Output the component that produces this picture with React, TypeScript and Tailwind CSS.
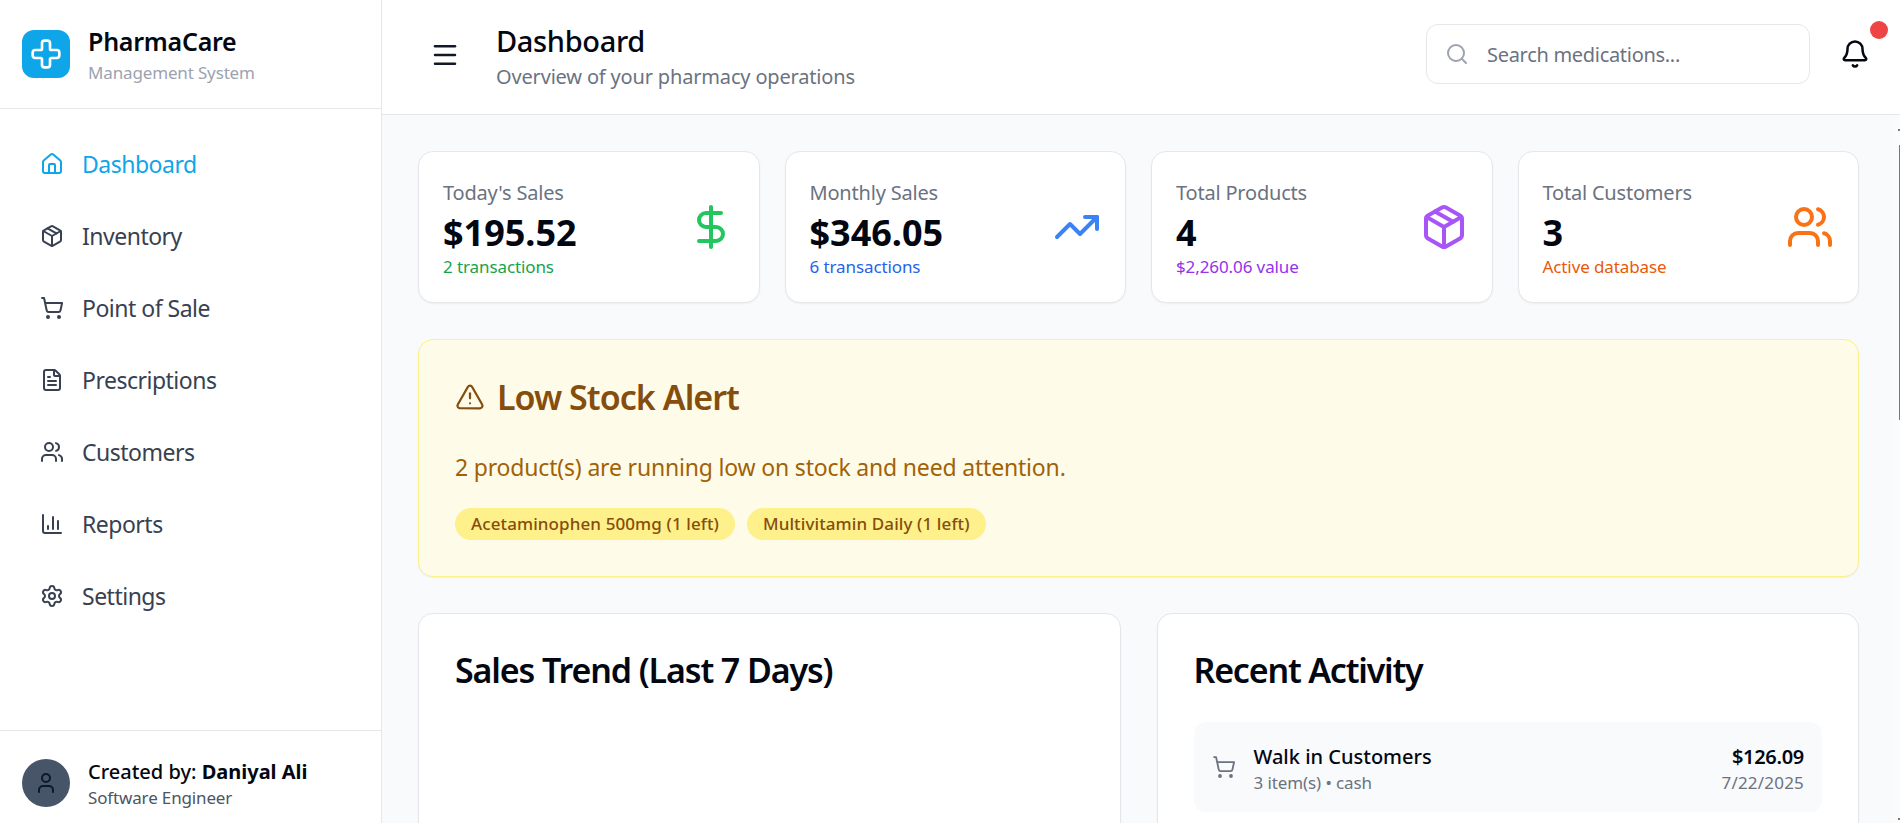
import { House, Package, ShoppingCart, FileText, Users, ChartColumn, Settings, Cross, User, Menu, Search, Bell, DollarSign, TrendingUp, TriangleAlert } from "lucide-react";

const nav = [
  { label: "Dashboard", Icon: House, active: true },
  { label: "Inventory", Icon: Package },
  { label: "Point of Sale", Icon: ShoppingCart },
  { label: "Prescriptions", Icon: FileText },
  { label: "Customers", Icon: Users },
  { label: "Reports", Icon: ChartColumn },
  { label: "Settings", Icon: Settings },
];

const stats = [
  { label: "Today's Sales", value: "$195.52", sub: "2 transactions", subClass: "text-[#16a34a]", Icon: DollarSign, iconClass: "text-[#22c55e]" },
  { label: "Monthly Sales", value: "$346.05", sub: "6 transactions", subClass: "text-[#2563eb]", Icon: TrendingUp, iconClass: "text-[#3b82f6]" },
  { label: "Total Products", value: "4", sub: "$2,260.06 value", subClass: "text-[#9333ea]", Icon: Package, iconClass: "text-[#a855f7]" },
  { label: "Total Customers", value: "3", sub: "Active database", subClass: "text-[#ea580c]", Icon: Users, iconClass: "text-[#f97316]" },
];

export default function App() {
  return (
    <div className="flex h-screen w-full overflow-hidden bg-white text-[#030712] font-['Noto_Sans','Open_Sans',sans-serif]">
      <aside className="flex h-full w-[382px] shrink-0 flex-col border-r border-[#e5e7eb] bg-white">
        <div className="flex h-[109px] shrink-0 items-center gap-[18px] border-b border-[#e5e7eb] pl-[22px] pb-[1px]">
          <div className="flex h-[48px] w-[48px] items-center justify-center rounded-[12px] bg-[#0ea5e9]">
            <Cross size={32} strokeWidth={2} className="text-white" />
          </div>
          <div>
            <div className="text-[25px] font-semibold leading-[36px] tracking-[-0.25px]">PharmaCare</div>
            <div className="mt-[1px] text-[17px] leading-[25px] text-[#9ca3af] tracking-[-0.15px]">Management System</div>
          </div>
        </div>
        <nav className="flex flex-1 flex-col pt-[19px]">
          {nav.map(({ label, Icon, active }) => (
            <div key={label} className={`flex h-[72px] shrink-0 items-center gap-[18px] pl-[40px] text-[23px] tracking-[-0.5px] ${active ? "text-[#0ea5e9]" : "text-[#374151]"}`}>
              <Icon size={24} strokeWidth={2} />
              <span>{label}</span>
            </div>
          ))}
        </nav>
        <div className="flex h-[93px] shrink-0 items-center gap-[18px] border-t border-[#e5e7eb] pl-[22px] pt-[12px]">
          <div className="flex h-[48px] w-[48px] items-center justify-center rounded-full bg-[#475569]">
            <User size={24} strokeWidth={2} className="text-[#0f172a]" />
          </div>
          <div>
            <div className="text-[20px] font-medium leading-[30px] tracking-[0px]">Created by: <span className="font-bold">Daniyal Ali</span></div>
            <div className="mt-[-1px] text-[17px] leading-[24px] text-[#4b5563] tracking-[-0.15px]">Software Engineer</div>
          </div>
        </div>
      </aside>

      <main className="relative flex h-full min-w-0 flex-1 flex-col bg-[#f9fafb]">
        <header className="flex h-[115px] shrink-0 items-center border-b border-[#e5e7eb] bg-white pl-[48px] pr-[30px]">
          <Menu size={30} strokeWidth={2} className="mb-[4px] text-[#111827]" />
          <div className="ml-[36px] flex-1">
            <div className="text-[29px] font-medium leading-[40px] tracking-[-0.35px] mt-[-2px] mb-[1px]">Dashboard</div>
            <div className="text-[20px] leading-[30px] text-[#6b7280] tracking-[-0.17px]">Overview of your pharmacy operations</div>
          </div>
          <div className="mb-[6px] flex h-[60px] w-[384px] items-center gap-[18px] rounded-[12px] border border-[#e5e7eb] bg-white pl-[18px]">
            <Search size={24} strokeWidth={2} className="text-[#9ca3af]" />
            <span className="pt-[2px] text-[20px] text-[#6b7280] tracking-[-0.3px]">Search medications...</span>
          </div>
          <div className="relative mb-[6px] ml-[30px] flex h-[30px] w-[30px] items-center justify-center">
            <Bell size={30} strokeWidth={2} className="text-[#030712]" />
            <span className="absolute right-[-18px] top-[-18px] h-[18px] w-[18px] rounded-full bg-[#ef4444]" />
          </div>
        </header>

        <div className="flex min-h-0 flex-1 flex-col gap-[36px] overflow-hidden pl-[36px] pr-[41px] pt-[36px]">
          <div className="grid shrink-0 grid-cols-4 gap-[25px]">
            {stats.map(({ label, value, sub, subClass, Icon, iconClass }) => (
              <div key={label} className="flex h-[152px] items-center justify-between rounded-[15px] border border-[#e5e7eb] bg-white px-[24px] shadow-[0_1px_2px_rgba(0,0,0,0.05)]">
                <div className="pt-[6px]">
                  <div className="mt-[-1px] text-[20px] leading-[28px] text-[#6b7280] tracking-[-0.2px]">{label}</div>
                  <div className="mt-[3px] text-[36px] font-bold leading-[46px] tracking-[0px]">{value}</div>
                  <div className={`mt-[-2px] text-[17px] leading-[26px] tracking-[-0.1px] ${subClass}`}>{sub}</div>
                </div>
                <Icon size={48} strokeWidth={2} className={iconClass} />
              </div>
            ))}
          </div>

          <div className="flex h-[238px] shrink-0 flex-col rounded-[15px] border border-[#fef08a] bg-[#fefce8] pl-[36px] shadow-[0_1px_2px_rgba(0,0,0,0.05)]">
            <div className="mt-[33px] flex items-center gap-[12px] text-[#854d0e]">
              <TriangleAlert size={30} strokeWidth={1.8} />
              <span className="text-[34px] font-semibold leading-[48px] tracking-[-0.95px]">Low Stock Alert</span>
            </div>
            <div className="mt-[30px] text-[23px] leading-[32px] text-[#a16207] tracking-[-0.18px]">2 product(s) are running low on stock and need attention.</div>
            <div className="mt-[25px] flex gap-[12px]">
              <span className="flex h-[32px] items-center rounded-full bg-[#fef08a] px-[16px] text-[17px] font-medium tracking-[0.1px] text-[#854d0e]">Acetaminophen 500mg (1 left)</span>
              <span className="flex h-[32px] items-center rounded-full bg-[#fef08a] px-[16px] text-[17px] font-medium tracking-[0.1px] text-[#854d0e]">Multivitamin Daily (1 left)</span>
            </div>
          </div>

          <div className="grid shrink-0 grid-cols-2 gap-[36px]">
            <div className="h-[300px] rounded-[15px] border border-[#e5e7eb] bg-white pl-[36px] pt-[32px] shadow-[0_1px_2px_rgba(0,0,0,0.05)]">
              <div className="text-[34px] font-semibold leading-[48px] tracking-[-1.12px]">Sales Trend (Last 7 Days)</div>
            </div>
            <div className="h-[300px] rounded-[15px] border border-[#e5e7eb] bg-white px-[36px] pt-[32px] shadow-[0_1px_2px_rgba(0,0,0,0.05)]">
              <div className="text-[34px] font-semibold leading-[48px] tracking-[-1.2px]">Recent Activity</div>
              <div className="mt-[28px] flex h-[90px] items-center rounded-[12px] bg-[#f9fafb] pl-[18px] pr-[18px]">
                <ShoppingCart size={24} strokeWidth={1.8} className="text-[#6b7280]" />
                <div className="ml-[18px] flex-1 pt-[4px]">
                  <div className="text-[20px] font-medium leading-[28px] tracking-[0px]">Walk in Customers</div>
                  <div className="text-[17px] leading-[24px] text-[#6b7280] tracking-[-0.1px]">3 item(s) • cash</div>
                </div>
                <div className="pt-[4px] text-right">
                  <div className="text-[20px] font-semibold leading-[28px] tracking-[-0.3px]">$126.09</div>
                  <div className="text-[17px] leading-[24px] text-[#6b7280] tracking-[0.2px]">7/22/2025</div>
                </div>
              </div>
            </div>
          </div>
        </div>
        <div className="absolute bottom-0 right-0 top-[115px] w-[6px] bg-[#fbfbfb]" />
        <div className="absolute right-0 top-[129px] h-[2px] w-[2px] bg-[#777]" />
        <div className="absolute right-0 top-[145px] h-[275px] w-[1px] bg-[#777]" />
        <div className="absolute bottom-[3px] right-0 h-[2px] w-[2px] bg-[#777]" />
      </main>
    </div>
  );
}
